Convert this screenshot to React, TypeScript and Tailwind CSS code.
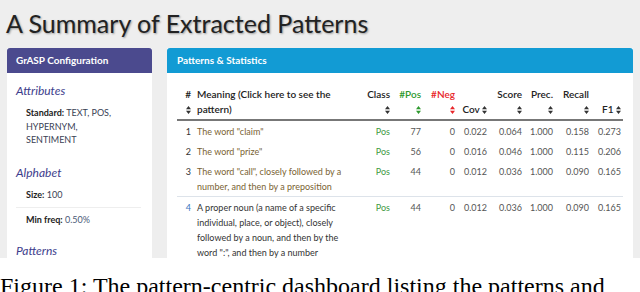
import React from "react";

const SortIcon = ({ color = "#333" }: { color?: string }) => (
  <svg width="5" height="8" viewBox="0 0 10 16" className="inline-block align-middle" fill={color}>
    <path d="M5 0 L10 6.5 H0 Z M0 9.5 H10 L5 16 Z" />
  </svg>
);

type Row = {
  id: number;
  lines: string[];
  pos: number;
  neg: number;
  cov: string;
  score: string;
  prec: string;
  recall: string;
  f1: string;
  active?: boolean;
};

const rows: Row[] = [
  { id: 1, lines: ['The word "claim"'], pos: 77, neg: 0, cov: "0.022", score: "0.064", prec: "1.000", recall: "0.158", f1: "0.273" },
  { id: 2, lines: ['The word "prize"'], pos: 56, neg: 0, cov: "0.016", score: "0.046", prec: "1.000", recall: "0.115", f1: "0.206" },
  {
    id: 3,
    lines: ['The word "call", closely followed by a', "number, and then by a preposition"],
    pos: 44, neg: 0, cov: "0.012", score: "0.036", prec: "1.000", recall: "0.090", f1: "0.165",
  },
  {
    id: 4,
    lines: [
      "A proper noun (a name of a specific",
      "individual, place, or object), closely",
      "followed by a noun, and then by the",
      'word ":", and then by a number',
    ],
    pos: 44, neg: 0, cov: "0.012", score: "0.036", prec: "1.000", recall: "0.090", f1: "0.165",
    active: true,
  },
];

export default function App() {
  return (
    <div className="w-[640px] h-[292px] bg-white overflow-hidden font-[Lato,'Open_Sans',sans-serif]">
      <div className="h-[258px] bg-[#eeeeee] overflow-hidden">
        <h1 className="pl-[6px] pt-[6px] text-[25px] leading-[34px] text-[#222] [text-shadow:1px_1px_2px_rgba(0,0,0,0.35)]">
          A Summary of Extracted Patterns
        </h1>

        <div className="flex gap-[15px] px-[7px] mt-[8px]">
          {/* left panel */}
          <div className="w-[145px] h-[220px] bg-white shrink-0">
            <div className="h-[25px] bg-[#4b4a8e] rounded-t-[3px] px-[9px] flex items-center text-white text-[10px] font-bold">
              GrASP Configuration
            </div>
            <div className="pl-[9px] pr-[11px] text-[9px] text-[#222]">
              <div className="pt-[10px] text-[12px] leading-[16px] italic text-[#3d3d8c]">Attributes</div>
              <div className="mt-[7px] pl-[10px] leading-[13.5px]">
                <span className="font-bold">Standard:</span> <span className="text-[#3a4254]">TEXT, POS,</span>
                <br />
                <span className="text-[#3a4254]">HYPERNYM,</span>
                <br />
                <span className="text-[#3a4254]">SENTIMENT</span>
              </div>
              <div className="mt-[18px] text-[12px] leading-[16px] italic text-[#3d3d8c]">Alphabet</div>
              <div className="mt-[7px] pl-[10px] leading-[14px]">
                <span className="font-bold">Size:</span> <span className="text-[#3a4254]">100</span>
              </div>
              <div className="mt-[5px] border-t border-[#eeeeee]" />
              <div className="mt-[5px] pl-[10px] leading-[14px]">
                <span className="font-bold">Min freq:</span> <span className="text-[#4a5a78]">0.50%</span>
              </div>
              <div className="mt-[16px] text-[12px] leading-[16px] italic text-[#3d3d8c]">Patterns</div>
            </div>
          </div>

          {/* right panel */}
          <div className="w-[466px] h-[220px] bg-white shrink-0">
            <div className="h-[25px] bg-[#129bd4] rounded-t-[3px] px-[10px] flex items-center text-white text-[10px] font-bold">
              Patterns &amp; Statistics
            </div>
            <div className="px-[10px] pt-[14px]">
              <table className="w-[446px] table-fixed border-collapse text-[9px] leading-[15px] text-[#333]">
                <colgroup>
                  <col className="w-[17px]" />
                  <col className="w-[168px]" />
                  <col className="w-[30px]" />
                  <col className="w-[31px]" />
                  <col className="w-[34px]" />
                  <col className="w-[32px]" />
                  <col className="w-[35px]" />
                  <col className="w-[31px]" />
                  <col className="w-[36px]" />
                  <col className="w-[32px]" />
                </colgroup>
                <thead>
                  <tr className="border-b-2 border-[#777] align-bottom text-[10px] font-semibold text-[#222]">
                    <th className="pb-[1.5px] pr-[3px] text-right font-semibold">
                      #<br />
                      <SortIcon />
                    </th>
                    <th className="pb-[1.5px] pl-[3px] text-left font-semibold whitespace-nowrap">
                      Meaning (Click here to see the<br />
                      pattern)
                    </th>
                    <th className="pb-[1.5px] pr-[2px] text-right font-semibold">
                      Class<br />
                      <SortIcon />
                    </th>
                    <th className="pb-[1.5px] pr-[2px] text-right font-semibold text-[#2f9a2f]">
                      #Pos<br />
                      <SortIcon color="#2f9a2f" />
                    </th>
                    <th className="pb-[1.5px] pr-[2px] text-right font-semibold text-[#e8262a]">
                      #Neg<br />
                      <SortIcon color="#e8262a" />
                    </th>
                    <th className="pb-[1.5px] pr-[2px] text-right font-semibold whitespace-nowrap">
                      Cov <SortIcon />
                    </th>
                    <th className="pb-[1.5px] pr-[2px] text-right font-semibold">
                      Score<br />
                      <SortIcon />
                    </th>
                    <th className="pb-[1.5px] pr-[2px] text-right font-semibold">
                      Prec.<br />
                      <SortIcon />
                    </th>
                    <th className="pb-[1.5px] pr-[2px] text-right font-semibold">
                      Recall<br />
                      <SortIcon />
                    </th>
                    <th className="pb-[1.5px] pr-[2px] text-right font-semibold whitespace-nowrap">
                      F1 <SortIcon />
                    </th>
                  </tr>
                </thead>
                <tbody>
                  {rows.map((r) => (
                    <tr key={r.id} className={`align-top ${r.active ? "border-t border-[#dde3ea]" : ""}`}>
                      <td className={`pt-[3px] pb-[2px] pr-[3px] text-right ${r.active ? "text-[#3c78c0]" : "text-[#333]"}`}>{r.id}</td>
                      <td className={`pt-[3px] pb-[2px] pl-[3px] whitespace-nowrap ${r.active ? "text-[#333]" : "text-[#7a6333]"}`}>
                        {r.lines.map((l, i) => (
                          <div key={i}>{l}</div>
                        ))}
                      </td>
                      <td className="pt-[3px] pb-[2px] pr-[2px] text-right text-[#3f9a3f]">Pos</td>
                      <td className="pt-[3px] pb-[2px] pr-[2px] text-right text-[#555]">{r.pos}</td>
                      <td className="pt-[3px] pb-[2px] pr-[2px] text-right text-[#555]">{r.neg}</td>
                      <td className="pt-[3px] pb-[2px] pr-[2px] text-right text-[#555]">{r.cov}</td>
                      <td className="pt-[3px] pb-[2px] pr-[2px] text-right text-[#555]">{r.score}</td>
                      <td className="pt-[3px] pb-[2px] pr-[2px] text-right text-[#555]">{r.prec}</td>
                      <td className="pt-[3px] pb-[2px] pr-[2px] text-right text-[#555]">{r.recall}</td>
                      <td className="pt-[3px] pb-[2px] pr-[2px] text-right text-[#555]">{r.f1}</td>
                    </tr>
                  ))}
                </tbody>
              </table>
            </div>
          </div>
        </div>
      </div>

      <p className="mt-[13px] whitespace-nowrap text-[24px] leading-[30px] text-black font-['Liberation_Serif','Times_New_Roman',serif]">
        Figure 1: The pattern-centric dashboard listing the patterns and
      </p>
    </div>
  );
}
